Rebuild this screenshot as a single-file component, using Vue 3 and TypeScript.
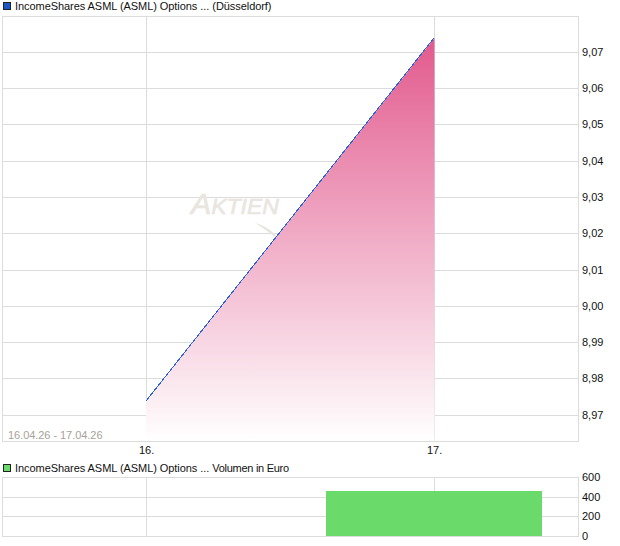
<script setup lang="ts">
const mainGrid: number[] = [52, 88, 124, 161, 197, 233, 270, 306, 342, 378, 415]
const mainLabels: string[] = ['9,07', '9,06', '9,05', '9,04', '9,03', '9,02', '9,01', '9,00', '8,99', '8,98', '8,97']
const volumeTicks = [
  { y: 477, label: '600' },
  { y: 497, label: '400' },
  { y: 516, label: '200' },
  { y: 536, label: '0' },
]
</script>

<template>
  <div class="page">
    <div class="legend legend-top">
      <span class="swatch swatch-blue"></span>
      <span class="legend-text">IncomeShares ASML (ASML) Options ... (Düsseldorf)</span>
    </div>
    <svg class="chart" width="620" height="448" viewBox="0 12 620 448">
      <defs>
        <linearGradient id="area" gradientUnits="userSpaceOnUse" x1="0" y1="38" x2="0" y2="441">
          <stop offset="0" stop-color="#e25a8d" />
          <stop offset="1" stop-color="#ffffff" />
        </linearGradient>
      </defs>
      <g class="wire">
        <line v-for="y in mainGrid" :key="y" x1="2" x2="578" :y1="y + 0.5" :y2="y + 0.5" />
        <line x1="146.5" x2="146.5" y1="16" y2="441" />
        <line x1="434.5" x2="434.5" y1="16" y2="441" />
      </g>
      <text class="mark" x="191" y="214" textLength="88" lengthAdjust="spacingAndGlyphs">A<tspan font-size="22">KTIEN</tspan></text>
      <path class="swoosh" d="M255 223 C266 226 275 232 280 241 C272 235 265 229 255 223 Z" />
      <polygon points="146,401 434.5,38 434.5,441 146,441" fill="url(#area)" />
      <line class="price" x1="146" y1="401" x2="434" y2="38" />
      <rect class="frame" x="2.5" y="16.5" width="576" height="425" />
      <text class="range" x="8" y="439">16.04.26 - 17.04.26</text>
      <text v-for="(label, i) in mainLabels" :key="label" class="tick" x="582" :y="mainGrid[i] + 4">{{ label }}</text>
      <text class="tick" x="139" y="454">16.</text>
      <text class="tick" x="427" y="454">17.</text>
    </svg>
    <div class="legend legend-bottom">
      <span class="swatch swatch-green"></span>
      <span class="legend-text">IncomeShares ASML (ASML) Options ... <span class="volume">Volumen in Euro</span></span>
    </div>
    <svg class="chart" width="620" height="72" viewBox="0 474 620 72">
      <g class="wire">
        <line x1="2" x2="578" y1="497.5" y2="497.5" />
        <line x1="2" x2="578" y1="516.5" y2="516.5" />
        <line x1="146.5" x2="146.5" y1="477" y2="536" />
        <line x1="434.5" x2="434.5" y1="477" y2="536" />
      </g>
      <rect class="bar" x="326" y="491" width="216" height="46" />
      <rect class="frame" x="2.5" y="477.5" width="576" height="59" />
      <text v-for="t in volumeTicks" :key="t.label" class="tick" x="582" :y="t.y + 4">{{ t.label }}</text>
    </svg>
  </div>
</template>

<style>
html, body { background: #fff; }
</style>

<style scoped>
.page {
  width: 620px;
  height: 546px;
  overflow: hidden;
  background: #fff;
  font-family: "Liberation Sans", Arial, sans-serif;
  font-size: 11px;
  color: #111;
}
.legend {
  display: flex;
  align-items: center;
  gap: 4px;
  padding-left: 3px;
  line-height: 12px;
}
.legend-text { letter-spacing: -0.06px; white-space: nowrap; }
.volume { letter-spacing: -0.28px; }
.legend-top { height: 12px; }
.legend-bottom { height: 14px; padding-top: 2px; box-sizing: border-box; }
.swatch {
  width: 6px;
  height: 6px;
  border: 1px solid #222;
  flex: none;
}
.swatch-blue { background: #1a56c4; }
.swatch-green { background: #6adb6a; }
.chart { display: block; overflow: visible; }
.wire line { stroke: #dcdcdc; stroke-width: 1; shape-rendering: crispEdges; }
.frame { fill: none; stroke: #dcdcdc; stroke-width: 1; shape-rendering: crispEdges; }
.price { stroke: #2a62dc; stroke-width: 1; shape-rendering: crispEdges; }
.bar { fill: #6adb6a; shape-rendering: crispEdges; }
.tick { font-size: 11px; fill: #111; font-family: "Liberation Sans", Arial, sans-serif; }
.range { font-size: 11px; fill: #a8a299; letter-spacing: -0.05px; font-family: "Liberation Sans", Arial, sans-serif; }
.mark { font-size: 29px; font-style: italic; fill: #e9e5df; stroke: #e9e5df; stroke-width: 0.6; font-family: "Liberation Sans", Arial, sans-serif; }
.swoosh { fill: #e9e5df; }
</style>
